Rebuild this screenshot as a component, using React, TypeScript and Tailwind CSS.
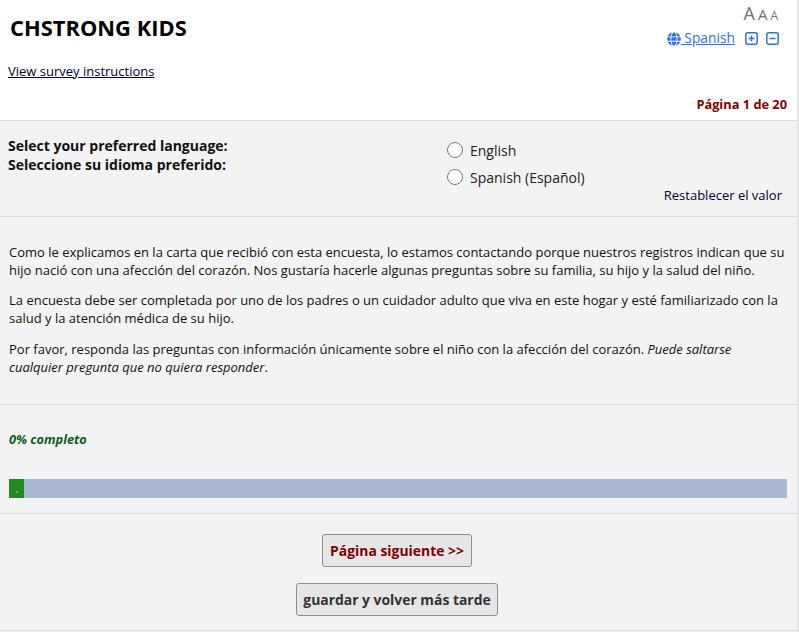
import React from 'react';
import { FaGlobe } from 'react-icons/fa';

const font = "font-['Open_Sans',sans-serif]";

const RadioOption = ({ label }: { label: string }) => (
  <label className="flex items-center h-[27px]">
    <span className="w-4 h-4 rounded-full border border-[#767676] bg-white" />
    <span className="ml-[7px] text-[14px] text-[#222] relative top-[1px]">{label}</span>
  </label>
);

const SmallBox = ({ sign }: { sign: 'plus' | 'minus' }) => (
  <svg width="13" height="13" viewBox="0 0 13 13" fill="none" stroke="#2f6fed" strokeWidth="1.5">
    <rect x="0.8" y="0.8" width="11.4" height="11.4" rx="2" />
    <path d="M3.5 6.5h6" />
    {sign === 'plus' && <path d="M6.5 3.5v6" />}
  </svg>
);

export default function App() {
  return (
    <div className={`${font} w-[799px] h-[632px] overflow-hidden bg-[#f3f3f3] text-black border-r-2 border-[#e4e4e4]`}>
      {/* Header */}
      <div className="bg-white h-[121px] border-b border-[#dcdcdc] flex flex-col px-2">
        <div className="flex justify-between">
          <div>
            <h1 className="text-[21.9px] font-bold leading-none mt-[17px] ml-[2px]">CHSTRONG KIDS</h1>
            <a className="block mt-[23px] text-[13px] leading-[18px] underline text-[#000033]">View survey instructions</a>
          </div>
          <div className="flex flex-col items-end pr-[10px]">
            <div className="flex items-baseline text-[#6f6f6f] gap-[3px] mt-[3px] leading-[20px] pr-[1px]">
              <span className="text-[18px]">A</span>
              <span className="text-[15px]">A</span>
              <span className="text-[12px]">A</span>
            </div>
            <div className="flex items-center mt-[4px] h-[17px]">
              <FaGlobe size={14} className="text-[#2f6fed]" />
              <a className="text-[13.8px] text-[#2f6fed] underline mr-[10px]">&nbsp;Spanish</a>
              <SmallBox sign="plus" />
              <span className="w-[8px]" />
              <SmallBox sign="minus" />
            </div>
          </div>
        </div>
        <div className="mt-auto mb-[6px] mr-[2px] text-right text-[12.8px] font-bold text-[#800000]">Página 1 de 20</div>
      </div>

      {/* Language */}
      <div className="h-[96px] border-b border-[#dcdcdc] px-2 flex">
        <div className="w-[439px] pt-[15px] text-[14px] font-bold leading-[19px] text-[#111]">
          <div>Select your preferred language:</div>
          <div>Seleccione su idioma preferido:</div>
        </div>
        <div className="flex-1 pt-[15px]">
          <RadioOption label="English" />
          <RadioOption label="Spanish (Español)" />
          <div className="text-right text-[13px] leading-[18px] pr-[7px] text-[#000033] mt-[-4px]">Restablecer el valor</div>
        </div>
      </div>

      {/* Intro */}
      <div className="h-[188px] border-b border-[#dcdcdc] pl-[9px] pr-[12px] pt-[26px] text-[13px] leading-[18px] text-[#111]">
        <p className="mb-[12px]">Como le explicamos en la carta que recibió con esta encuesta, lo estamos contactando porque nuestros registros indican que su hijo nació con una afección del corazón. Nos gustaría hacerle algunas preguntas sobre su familia, su hijo y la salud del niño.</p>
        <p className="mb-[13px]">La encuesta debe ser completada por uno de los padres o un cuidador adulto que viva en este hogar y esté familiarizado con la salud y la atención médica de su hijo.</p>
        <p>Por favor, responda las preguntas con información únicamente sobre el niño con la afección del corazón. <em>Puede saltarse cualquier pregunta que no quiera responder</em>.</p>
      </div>

      {/* Progress */}
      <div className="h-[109px] border-b border-[#dcdcdc] px-[9px] pt-[25px]">
        <div className="text-[12.8px] font-bold italic text-[#0b5d1e] leading-[18px]">0% completo</div>
        <div className="mt-[31px] mr-[1px] h-[19px] bg-[#a9b9d1]">
          <div className="relative w-[15px] h-full bg-[#228b22]">
            <span className="absolute left-[7px] bottom-[5px] w-[2px] h-[2px] bg-[#8a9aa8]" />
          </div>
        </div>
      </div>

      {/* Buttons */}
      <div className="h-[117px] border-b border-[#dcdcdc] flex flex-col items-center pt-[20px] gap-[16px] pr-[3px]">
        <button className="h-[33px] px-[7px] pt-[1px] rounded-[3px] border border-[#8f8f8f] bg-[#e6e6e6] text-[13.9px] font-bold text-[#800000]">Página siguiente &gt;&gt;</button>
        <button className="h-[33px] px-[6px] pt-[1px] rounded-[3px] border border-[#8f8f8f] bg-[#e6e6e6] text-[13.9px] font-bold text-[#333]">guardar y volver más tarde</button>
      </div>
    </div>
  );
}
